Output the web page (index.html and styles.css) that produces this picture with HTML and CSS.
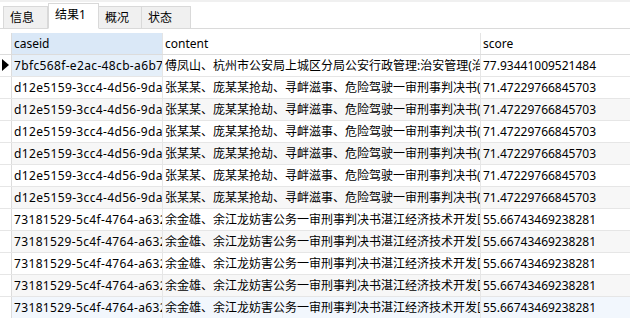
FILE: index.html
```html
<!DOCTYPE html>
<html lang="zh-CN">
<head>
    <meta charset="UTF-8">
    <title>结果1</title>
    <link rel="stylesheet" href="styles.css">
</head>
<body>
    <div class="tabbar">
        <div class="tab" style="width: 45px">信息</div>
        <div class="tab active" style="width: 51px">结果1</div>
        <div class="tab" style="width: 43px">概况</div>
        <div class="tab" style="width: 49px">状态</div>
    </div>

    <div class="grid">
        <div class="row head">
            <div class="gutter"></div>
            <div class="cell c-id focus">caseid</div>
            <div class="cell c-content">content</div>
            <div class="cell c-score">score</div>
        </div>

        <div class="row current">
            <div class="gutter"><span class="arrow"></span></div>
            <div class="cell c-id focus">7bfc568f-e2ac-48cb-a6b7-3e1f0c9d4a52</div>
            <div class="cell c-content">傅凤山、杭州市公安局上城区分局公安行政管理:治安管理(治安)一审行政判决书</div>
            <div class="cell c-score">77.93441009521484</div>
        </div>
        <div class="row">
            <div class="gutter"></div>
            <div class="cell c-id">d12e5159-3cc4-4d56-9da1-7c2b8e4f6a10</div>
            <div class="cell c-content">张某某、庞某某抢劫、寻衅滋事、危险驾驶一审刑事判决书(2017)</div>
            <div class="cell c-score">71.47229766845703</div>
        </div>
        <div class="row">
            <div class="gutter"></div>
            <div class="cell c-id">d12e5159-3cc4-4d56-9da1-7c2b8e4f6a10</div>
            <div class="cell c-content">张某某、庞某某抢劫、寻衅滋事、危险驾驶一审刑事判决书(2017)</div>
            <div class="cell c-score">71.47229766845703</div>
        </div>
        <div class="row">
            <div class="gutter"></div>
            <div class="cell c-id">d12e5159-3cc4-4d56-9da1-7c2b8e4f6a10</div>
            <div class="cell c-content">张某某、庞某某抢劫、寻衅滋事、危险驾驶一审刑事判决书(2017)</div>
            <div class="cell c-score">71.47229766845703</div>
        </div>
        <div class="row">
            <div class="gutter"></div>
            <div class="cell c-id">d12e5159-3cc4-4d56-9da1-7c2b8e4f6a10</div>
            <div class="cell c-content">张某某、庞某某抢劫、寻衅滋事、危险驾驶一审刑事判决书(2017)</div>
            <div class="cell c-score">71.47229766845703</div>
        </div>
        <div class="row">
            <div class="gutter"></div>
            <div class="cell c-id">d12e5159-3cc4-4d56-9da1-7c2b8e4f6a10</div>
            <div class="cell c-content">张某某、庞某某抢劫、寻衅滋事、危险驾驶一审刑事判决书(2017)</div>
            <div class="cell c-score">71.47229766845703</div>
        </div>
        <div class="row">
            <div class="gutter"></div>
            <div class="cell c-id">d12e5159-3cc4-4d56-9da1-7c2b8e4f6a10</div>
            <div class="cell c-content">张某某、庞某某抢劫、寻衅滋事、危险驾驶一审刑事判决书(2017)</div>
            <div class="cell c-score">71.47229766845703</div>
        </div>
        <div class="row">
            <div class="gutter"></div>
            <div class="cell c-id">73181529-5c4f-4764-a632-0b9d1e7f3c84</div>
            <div class="cell c-content">余金雄、余江龙妨害公务一审刑事判决书湛江经济技术开发区人民法院</div>
            <div class="cell c-score">55.66743469238281</div>
        </div>
        <div class="row">
            <div class="gutter"></div>
            <div class="cell c-id">73181529-5c4f-4764-a632-0b9d1e7f3c84</div>
            <div class="cell c-content">余金雄、余江龙妨害公务一审刑事判决书湛江经济技术开发区人民法院</div>
            <div class="cell c-score">55.66743469238281</div>
        </div>
        <div class="row">
            <div class="gutter"></div>
            <div class="cell c-id">73181529-5c4f-4764-a632-0b9d1e7f3c84</div>
            <div class="cell c-content">余金雄、余江龙妨害公务一审刑事判决书湛江经济技术开发区人民法院</div>
            <div class="cell c-score">55.66743469238281</div>
        </div>
        <div class="row">
            <div class="gutter"></div>
            <div class="cell c-id">73181529-5c4f-4764-a632-0b9d1e7f3c84</div>
            <div class="cell c-content">余金雄、余江龙妨害公务一审刑事判决书湛江经济技术开发区人民法院</div>
            <div class="cell c-score">55.66743469238281</div>
        </div>
        <div class="row hover">
            <div class="gutter"></div>
            <div class="cell c-id">73181529-5c4f-4764-a632-0b9d1e7f3c84</div>
            <div class="cell c-content">余金雄、余江龙妨害公务一审刑事判决书湛江经济技术开发区人民法院</div>
            <div class="cell c-score">55.66743469238281</div>
        </div>
    </div>
</body>
</html>
```

FILE: styles.css
```css
body {
    margin: 0;
    background: #ffffff;
    font-family: "Noto Sans", "Noto Sans CJK SC", sans-serif;
    font-size: 12px;
    color: #000;
    overflow: hidden;
}

/* Tabs */
.tabbar {
    display: flex;
    align-items: flex-end;
    height: 26px;
    padding-left: 3px;
    border-top: 2px solid #f0f0f0;
    border-bottom: 1px solid #dadada;
}
.tab {
    box-sizing: border-box;
    height: 23px;
    margin-bottom: -1px;
    padding-left: 6px;
    line-height: 21px;
    background: #f0f0f0;
    border: 1px solid #d9d9d9;
    border-left: none;
}
.tab:first-child {
    border-left: 1px solid #d9d9d9;
}
.tab.active {
    height: 26px;
    line-height: 22px;
    background: #ffffff;
    border-bottom-color: #ffffff;
    border-left: 1px solid #d9d9d9;
}

/* Grid */
.grid {
    margin-top: 4px;
}
.row {
    display: flex;
    height: 22px;
    border-bottom: 1px solid #e6e6e6;
    box-sizing: border-box;
}
.row:nth-child(even) {
    background: #f7f7f7;
}
.row.current {
    background: #ffffff;
}
.row.hover {
    background: #f2f7fd;
}
.row.head {
    background: #ffffff;
    border-bottom-color: #dcdcdc;
    line-height: 22px;
}
.gutter {
    flex: none;
    width: 11px;
    border-right: 1px solid #dcdcdc;
    background: #ffffff;
    position: relative;
}
.arrow {
    position: absolute;
    left: 2px;
    top: 4px;
    border-left: 7px solid #000;
    border-top: 6px solid transparent;
    border-bottom: 6px solid transparent;
}
.cell {
    flex: none;
    box-sizing: border-box;
    padding-left: 2px;
    line-height: 21px;
    white-space: nowrap;
    overflow: hidden;
    border-right: 1px solid #e6e6e6;
}
.c-id {
    width: 151px;
    letter-spacing: 0.35px;
}
.c-content {
    width: 318px;
}
.c-score {
    flex: 1;
    border-right: none;
}
.head .cell {
    line-height: 22px;
    letter-spacing: 0;
    border-right-color: #e4e4e4;
}
.head .focus {
    background: #dae8f7;
}
.current .focus {
    background: #e5eff9;
}
```
